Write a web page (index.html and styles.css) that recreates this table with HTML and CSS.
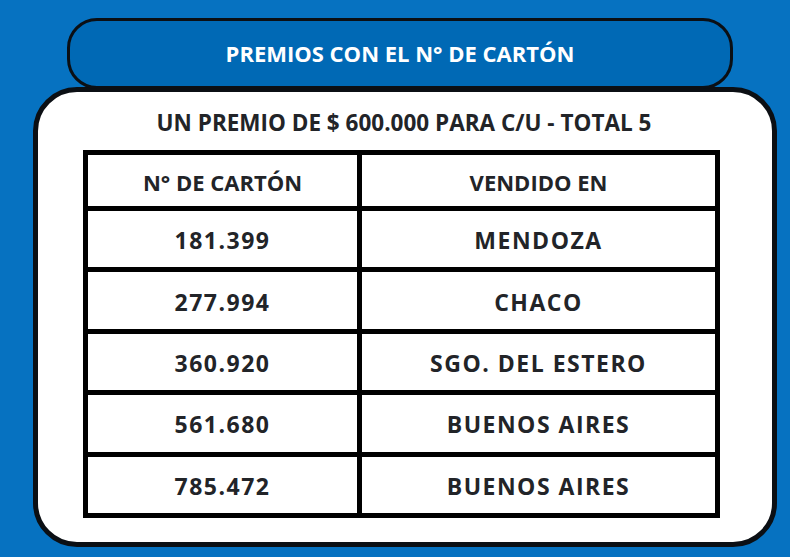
FILE: index.html
```html
<!DOCTYPE html>
<html lang="es">
<head>
<meta charset="utf-8">
<title>Premios con el N° de cartón</title>
<link rel="stylesheet" href="styles.css">
</head>
<body>
<div class="page">
  <div class="banner">PREMIOS CON EL N° DE CARTÓN</div>
  <div class="card">
    <div class="subtitle">UN PREMIO DE $ 600.000 PARA C/U - TOTAL 5</div>
    <div class="grid">
      <div class="cell head">N° DE CARTÓN</div>
      <div class="cell head">VENDIDO EN</div>
      <div class="cell">181.399</div>
      <div class="cell">MENDOZA</div>
      <div class="cell">277.994</div>
      <div class="cell">CHACO</div>
      <div class="cell">360.920</div>
      <div class="cell">SGO. DEL ESTERO</div>
      <div class="cell">561.680</div>
      <div class="cell">BUENOS AIRES</div>
      <div class="cell">785.472</div>
      <div class="cell">BUENOS AIRES</div>
    </div>
  </div>
</div>
</body>
</html>
```
FILE: styles.css
```css
html, body {
  margin: 0;
  padding: 0;
  background: #0672c1;
}
body {
  font-family: "Open Sans", "Noto Sans", "DejaVu Sans", sans-serif;
  width: 790px;
  height: 557px;
  overflow: hidden;
}
.page {
  padding-top: 18px;
  display: flex;
  flex-direction: column;
}
.banner {
  position: relative;
  z-index: 2;
  margin-left: 67px;
  width: 666px;
  height: 71px;
  box-sizing: border-box;
  border: 3px solid #0b0f14;
  border-radius: 30px;
  background: #0069b5;
  color: #ffffff;
  font-weight: 700;
  font-size: 22px;
  letter-spacing: 0;
  display: flex;
  align-items: center;
  justify-content: center;
  padding-bottom: 2px;
}
.card {
  margin-top: -2px;
  margin-left: 33px;
  width: 744px;
  height: 460px;
  box-sizing: border-box;
  border: 5px solid #0b0f14;
  border-radius: 44px;
  background: #ffffff;
  display: flex;
  flex-direction: column;
  padding-left: 45px;
}
.subtitle {
  height: 58px;
  display: flex;
  align-items: center;
  justify-content: center;
  padding-left: 5px;
  padding-right: 52px;
  color: #222428;
  font-weight: 700;
  font-size: 22.5px;
  letter-spacing: 0;
  padding-top: 2px;
  box-sizing: border-box;
}
.grid {
  width: 637px;
  box-sizing: border-box;
  border: 5px solid #000;
  background: #000;
  display: grid;
  grid-template-columns: 269px 1fr;
  grid-template-rows: 51px repeat(5, 56.4px);
  gap: 5px;
}
.cell {
  background: #fff;
  color: #222428;
  font-weight: 700;
  font-size: 23px;
  letter-spacing: 1.5px;
  display: flex;
  align-items: center;
  justify-content: center;
  padding-top: 2px;
  box-sizing: border-box;
}
.cell.head {
  font-size: 22px;
  letter-spacing: 0;
}
```
